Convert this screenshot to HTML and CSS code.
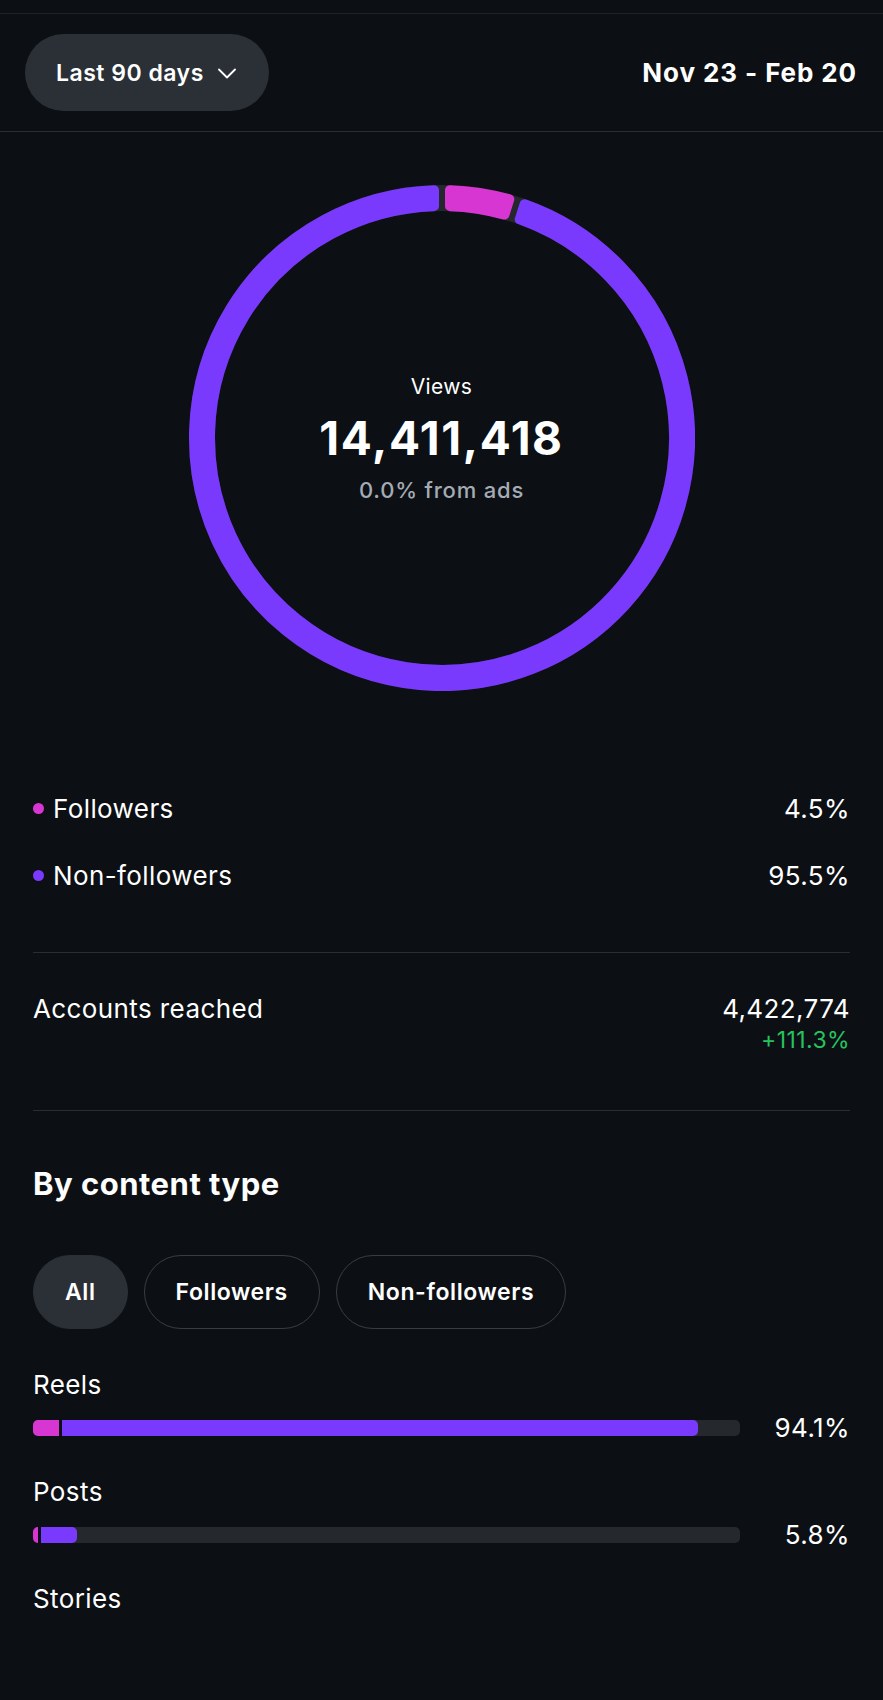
FILE: index.html
```html
<!DOCTYPE html>
<html lang="en">
<head>
    <meta charset="UTF-8">
    <meta name="viewport" content="width=device-width, initial-scale=1.0">
    <title>Views</title>
    <link rel="stylesheet" href="styles.css">
</head>
<body>
    <div class="topline"></div>

    <div class="header">
        <button class="range-btn">
            Last 90 days
            <svg class="chevron" width="18" height="11" viewBox="0 0 18 11">
                <polyline points="1,1.5 9,9.5 17,1.5" fill="none" stroke="#fff" stroke-width="1.8" stroke-linecap="round" stroke-linejoin="round"/>
            </svg>
        </button>
        <span class="date-range">Nov 23 - Feb 20</span>
    </div>

    <div class="chart">
        <svg class="ring" width="506" height="506" viewBox="-253 -253 506 506">
            <circle cx="0" cy="0" r="240" fill="none" stroke="#24272c" stroke-width="26"/>
            <!-- followers 4.5% -->
            <path class="seg-pink" d="M 8.00 -247.87 A 248 248 0 0 1 67.32 -238.69 L 62.48 -223.43 A 232 232 0 0 0 8.00 -231.86 Z"/>
            <!-- non-followers 95.5% -->
            <path class="seg-purple" d="M 82.58 -233.85 A 248 248 0 1 1 -8.00 -247.87 L -8.00 -231.86 A 232 232 0 1 0 77.73 -218.59 Z"/>
        </svg>
        <div class="chart-label">
            <div class="views">Views</div>
            <div class="total">14,411,418</div>
            <div class="ads">0.0% from ads</div>
        </div>
    </div>

    <div class="section">
        <div class="legend">
            <div class="legend-row">
                <span class="legend-name"><i class="dot pink"></i>Followers</span>
                <span>4.5%</span>
            </div>
            <div class="legend-row">
                <span class="legend-name"><i class="dot purple"></i>Non-followers</span>
                <span>95.5%</span>
            </div>
        </div>

        <div class="stat">
            <span>Accounts reached</span>
            <div class="stat-value">
                <div>4,422,774</div>
                <div class="up">+111.3%</div>
            </div>
        </div>

        <h2>By content type</h2>

        <div class="chips">
            <button class="chip active">All</button>
            <button class="chip">Followers</button>
            <button class="chip">Non-followers</button>
        </div>

        <div class="type">
            <div class="type-name">Reels</div>
            <div class="type-row">
                <div class="track">
                    <div class="fill-pink" style="width: 3.7%"></div>
                    <div class="fill-gap"></div>
                    <div class="fill-purple" style="width: 89.9%"></div>
                </div>
                <span class="pct">94.1%</span>
            </div>
        </div>

        <div class="type">
            <div class="type-name">Posts</div>
            <div class="type-row">
                <div class="track">
                    <div class="fill-pink" style="width: 0.7%"></div>
                    <div class="fill-gap"></div>
                    <div class="fill-purple" style="width: 5.1%"></div>
                </div>
                <span class="pct">5.8%</span>
            </div>
        </div>

        <div class="type">
            <div class="type-name">Stories</div>
        </div>
    </div>
</body>
</html>
```

FILE: styles.css
```css
body {
    margin: 0;
    background-color: #0c1014;
    color: #ffffff;
    font-family: Inter, "Noto Sans", sans-serif;
}

.topline {
    height: 13px;
    border-bottom: 1px solid #1f2327;
}

.header {
    display: flex;
    justify-content: space-between;
    align-items: center;
    padding: 20px 26px 20px 25px;
    border-bottom: 1px solid #2a2d32;
}

.range-btn {
    display: flex;
    align-items: center;
    gap: 14px;
    height: 77px;
    padding: 0 33px 0 31px;
    border: none;
    border-radius: 39px;
    background-color: #2b3036;
    color: #ffffff;
    font-family: inherit;
    font-size: 23px;
    font-weight: 600;
    letter-spacing: 0.5px;
}

.chevron {
    margin-top: 2px;
}

.date-range {
    font-size: 26px;
    font-weight: 700;
    letter-spacing: 0.9px;
}

.chart {
    display: grid;
    justify-content: center;
    margin-top: 53px;
}

.ring,
.chart-label {
    grid-area: 1 / 1;
}

.ring {
    display: block;
}

.seg-pink {
    fill: #d836d2;
    stroke: #d836d2;
    stroke-width: 10;
    stroke-linejoin: round;
}

.seg-purple {
    fill: #7a3afd;
    stroke: #7a3afd;
    stroke-width: 10;
    stroke-linejoin: round;
}

.chart-label {
    display: flex;
    flex-direction: column;
    align-items: center;
    justify-content: center;
}

.views {
    font-size: 21px;
    line-height: 28px;
    letter-spacing: 0.4px;
}

.total {
    font-size: 46px;
    font-weight: 700;
    line-height: 54px;
    letter-spacing: 1.6px;
    margin: 10px 0 11px;
}

.ads {
    font-size: 22px;
    font-weight: 500;
    line-height: 28px;
    letter-spacing: 0.8px;
    color: #a5abb4;
}

.section {
    padding: 0 33px 0 33px;
    font-size: 26px;
    letter-spacing: 0.4px;
}

.legend {
    padding-top: 84px;
    padding-bottom: 43px;
    border-bottom: 1px solid #2a2d32;
}

.legend-row {
    display: flex;
    justify-content: space-between;
    align-items: center;
    height: 67px;
}

.legend-name {
    display: flex;
    align-items: center;
    gap: 9px;
}

.dot {
    width: 11px;
    height: 11px;
    border-radius: 50%;
}

.dot.pink {
    background-color: #d836d2;
}

.dot.purple {
    background-color: #7a3afd;
}

.stat {
    display: flex;
    justify-content: space-between;
    align-items: flex-start;
    padding: 40px 0 56px;
    line-height: 32px;
    border-bottom: 1px solid #2a2d32;
}

.stat-value {
    text-align: right;
}

.stat-value .up {
    color: #25c35f;
    font-size: 23px;
    line-height: 28px;
    margin-top: 1px;
}

h2 {
    margin: 55px 0 0;
    font-size: 31px;
    font-weight: 700;
    line-height: 36px;
    letter-spacing: 0.5px;
}

.chips {
    display: flex;
    gap: 16px;
    margin-top: 53px;
}

.chip {
    height: 74px;
    padding: 0 31px;
    border: 1.5px solid #393c42;
    border-radius: 37px;
    background: none;
    color: #ffffff;
    font-family: inherit;
    font-size: 23px;
    font-weight: 600;
    letter-spacing: 0.6px;
}

.chip.active {
    background-color: #2b3036;
    border-color: #2b3036;
}

.type-name {
    line-height: 32px;
    margin-top: 40px;
}

.type + .type .type-name {
    margin-top: 32px;
}

.type-row {
    display: flex;
    align-items: center;
    margin-top: 11px;
    line-height: 32px;
}

.track {
    flex: 1;
    display: flex;
    height: 16px;
    border-radius: 5px;
    background-color: #25282d;
    overflow: hidden;
}

.fill-pink {
    background-color: #d836d2;
}

.fill-gap {
    width: 3px;
    background-color: #0c1014;
}

.fill-purple {
    background-color: #7a3afd;
    border-radius: 0 5px 5px 0;
}

.pct {
    width: 110px;
    text-align: right;
}
```
